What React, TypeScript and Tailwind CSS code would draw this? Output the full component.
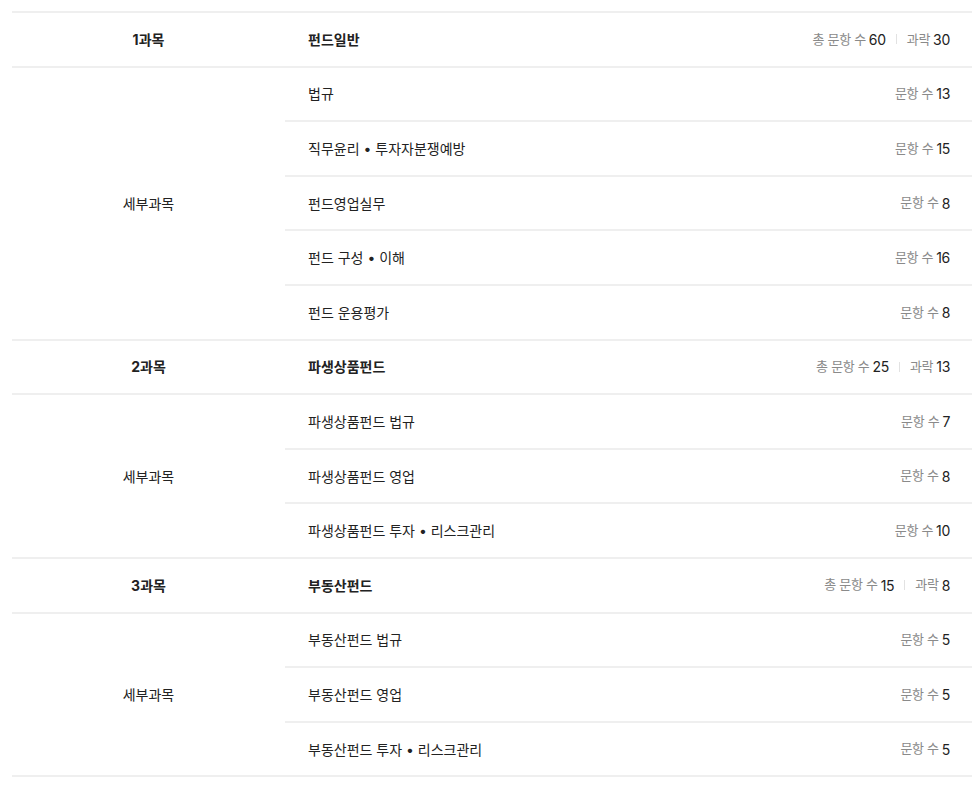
import React from "react";

type Sub = { name: string; count: number };
type Group = {
  label: string;
  title: string;
  total: number;
  cutoff: number;
  subs: Sub[];
};

const groups: Group[] = [
  {
    label: "1과목",
    title: "펀드일반",
    total: 60,
    cutoff: 30,
    subs: [
      { name: "법규", count: 13 },
      { name: "직무윤리 • 투자자분쟁예방", count: 15 },
      { name: "펀드영업실무", count: 8 },
      { name: "펀드 구성 • 이해", count: 16 },
      { name: "펀드 운용평가", count: 8 },
    ],
  },
  {
    label: "2과목",
    title: "파생상품펀드",
    total: 25,
    cutoff: 13,
    subs: [
      { name: "파생상품펀드 법규", count: 7 },
      { name: "파생상품펀드 영업", count: 8 },
      { name: "파생상품펀드 투자 • 리스크관리", count: 10 },
    ],
  },
  {
    label: "3과목",
    title: "부동산펀드",
    total: 15,
    cutoff: 8,
    subs: [
      { name: "부동산펀드 법규", count: 5 },
      { name: "부동산펀드 영업", count: 5 },
      { name: "부동산펀드 투자 • 리스크관리", count: 5 },
    ],
  },
];

export default function App() {
  return (
    <div
      className="min-h-screen bg-white pt-[11px] px-[8px] text-[14px] text-[#222]"
      style={{ fontFamily: '"Inter", "Noto Sans CJK KR", sans-serif' }}
    >
      <div className="ml-[4px] w-[960px] border-t-2 border-[#efefef]">
        {groups.map((g) => (
          <div key={g.label}>
            {/* 과목 헤더 */}
            <div className="flex h-[54.6px] items-center border-b-2 border-[#efefef]">
              <div className="w-[273px] text-center font-bold">{g.label}</div>
              <div className="flex flex-1 items-center justify-between pl-[23px] pr-[22px]">
                <span className="font-bold">{g.title}</span>
                <span className="flex items-center tracking-[-0.3px]">
                  <span className="text-[13px] text-[#8a8a8a]">총 문항 수</span>
                  <span className="ml-[3px]">{g.total}</span>
                  <span className="mx-[10px] h-[10px] w-px bg-[#e2e2e2]" />
                  <span className="text-[13px] text-[#8a8a8a]">과락</span>
                  <span className="ml-[3px]">{g.cutoff}</span>
                </span>
              </div>
            </div>

            {/* 세부과목 */}
            <div className="flex border-b-2 border-[#efefef]">
              <div className="flex w-[273px] items-center justify-center">세부과목</div>
              <div className="flex-1">
                {g.subs.map((s, i) => {
                  const last = i === g.subs.length - 1;
                  return (
                    <div
                      key={s.name}
                      className={
                        last
                          ? "flex h-[52.6px] items-center justify-between pl-[23px] pr-[22px]"
                          : "flex h-[54.6px] items-center justify-between border-b-2 border-[#efefef] pl-[23px] pr-[22px]"
                      }
                    >
                      <span>{s.name}</span>
                      <span className="flex items-center tracking-[-0.3px]">
                        <span className="text-[13px] text-[#8a8a8a]">문항 수</span>
                        <span className="ml-[3px]">{s.count}</span>
                      </span>
                    </div>
                  );
                })}
              </div>
            </div>
          </div>
        ))}
      </div>
    </div>
  );
}
